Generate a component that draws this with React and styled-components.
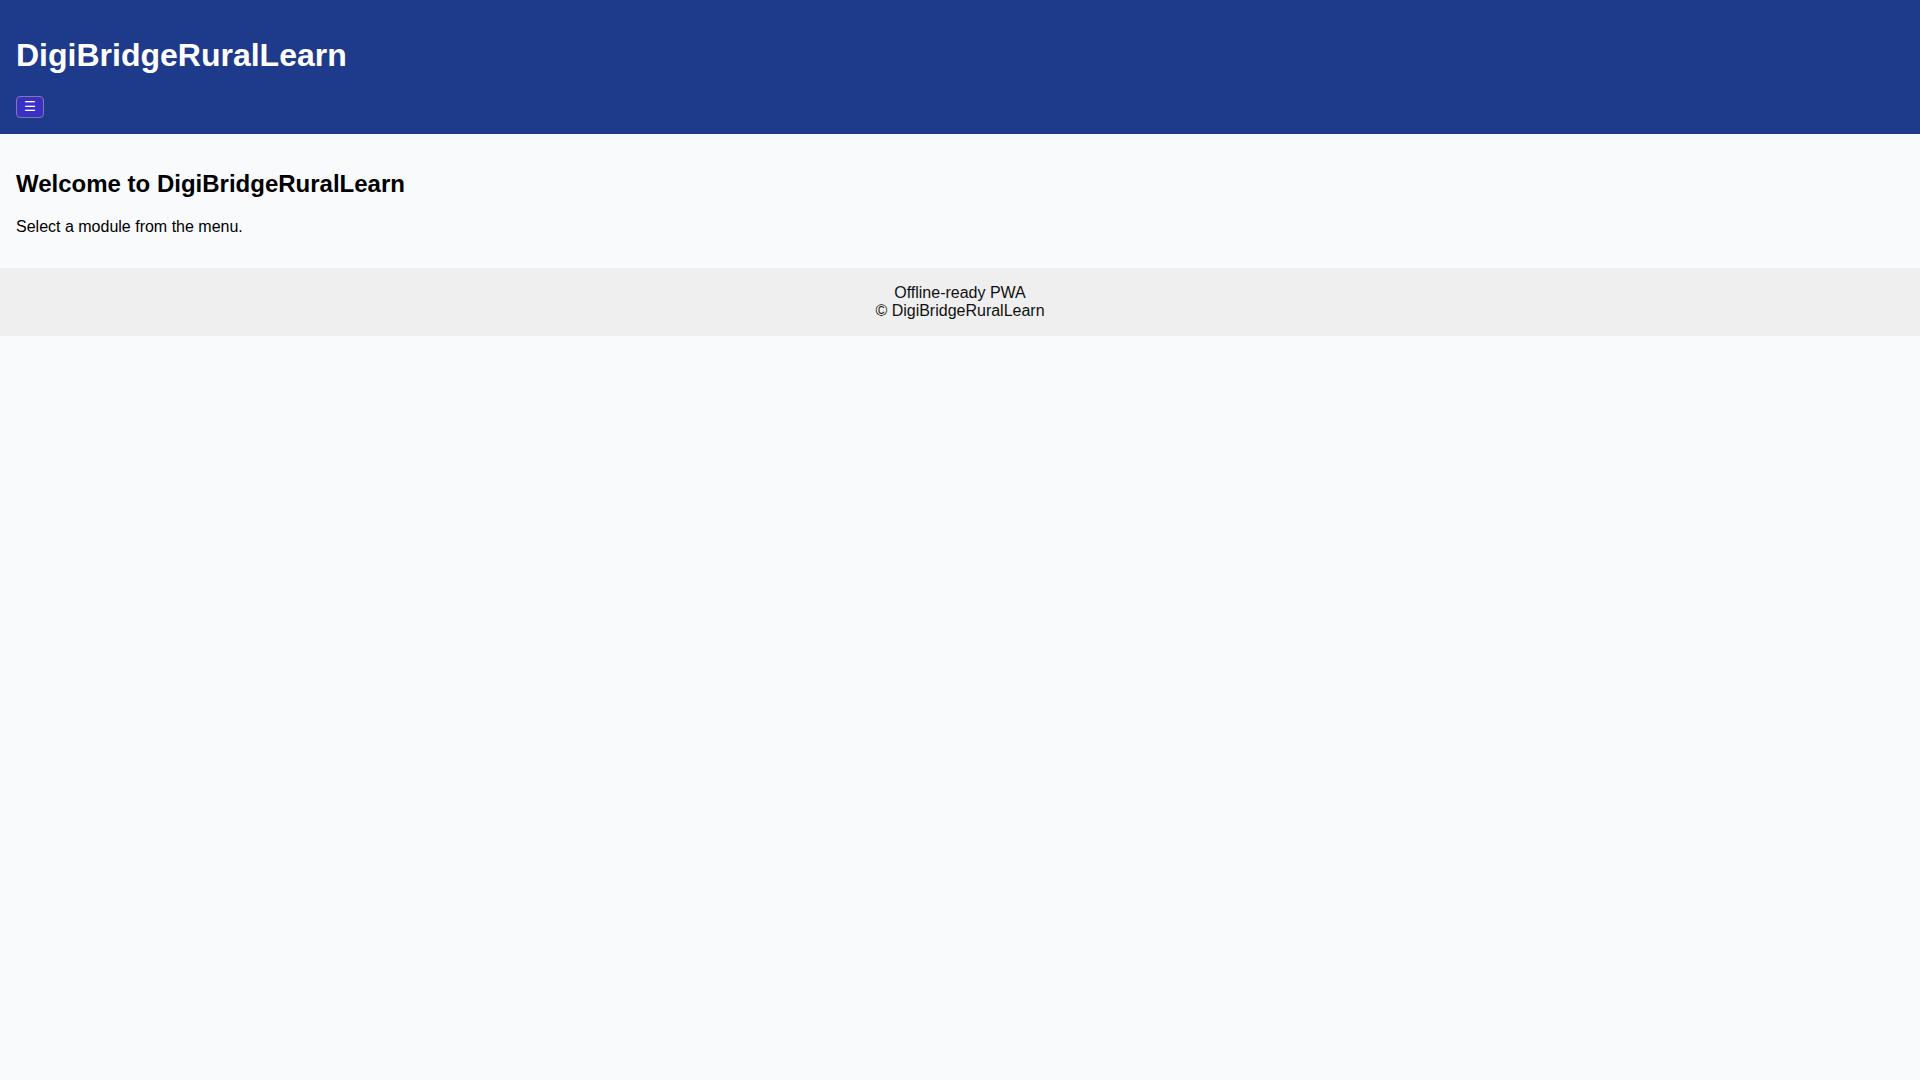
import styled, { createGlobalStyle } from "styled-components";

const GlobalStyle = createGlobalStyle`
  html, body {
    margin: 0;
    padding: 0;
    background: #f8fafc;
    font-family: "Liberation Sans", Arial, sans-serif;
    color: #000;
  }
`;

const Header = styled.header`
  background: #1e3a8a;
  color: #fff;
  padding: 16px;
`;

const Title = styled.h1`
  font-size: 32px;
  font-weight: bold;
  margin: 21.44px 0;
`;

const MenuButton = styled.button`
  display: block;
  background: #3b30c4;
  color: #fff;
  border: 1px solid #7c7ca4;
  border-radius: 4px;
  padding: 2px 7px;
  font-size: 13.33px;
  line-height: 16px;
  font-family: "DejaVu Sans", sans-serif;
  cursor: pointer;
`;

const Main = styled.main`
  padding: 16px;
`;

const Heading = styled.h2`
  font-size: 24px;
  font-weight: bold;
  margin: 19.92px 0;
`;

const Text = styled.p`
  font-size: 16px;
  margin: 16px 0;
`;

const Footer = styled.footer`
  background: #efefef;
  color: #111;
  text-align: center;
  padding: 16px;
  font-size: 16px;
`;

export default function App() {
  return (
    <>
      <GlobalStyle />
      <Header>
        <Title>DigiBridgeRuralLearn</Title>
        <MenuButton aria-label="Menu">☰</MenuButton>
      </Header>
      <Main>
        <Heading>Welcome to DigiBridgeRuralLearn</Heading>
        <Text>Select a module from the menu.</Text>
      </Main>
      <Footer>
        <div>Offline-ready PWA</div>
        <div>© DigiBridgeRuralLearn</div>
      </Footer>
    </>
  );
}
